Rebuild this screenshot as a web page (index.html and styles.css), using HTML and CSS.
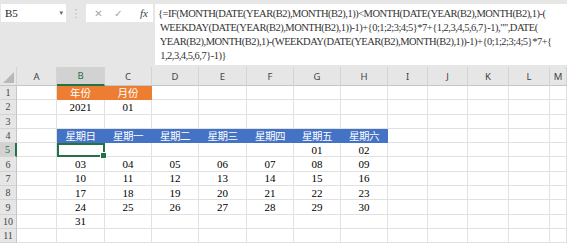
FILE: index.html
```html
<!DOCTYPE html>
<html lang="zh-Hant">
<head>
    <meta charset="UTF-8">
    <title>萬年曆</title>
    <link rel="stylesheet" href="styles.css">
</head>
<body>
    <div class="topbar">
        <div class="name-box"><span>B5</span><span class="caret">▾</span></div>
        <div class="grip">⋮</div>
        <div class="fx-box">
            <span class="btn">✕</span>
            <span class="btn">✓</span>
            <span class="fx">fx</span>
        </div>
        <div class="formula">{=IF(MONTH(DATE(YEAR(B2),MONTH(B2),1))&lt;MONTH(DATE(YEAR(B2),MONTH(B2),1)-(
 WEEKDAY(DATE(YEAR(B2),MONTH(B2),1))-1)+{0;1;2;3;4;5}*7+{1,2,3,4,5,6,7}-1),"",DATE(
 YEAR(B2),MONTH(B2),1)-(WEEKDAY(DATE(YEAR(B2),MONTH(B2),1))-1)+{0;1;2;3;4;5}*7+{
 1,2,3,4,5,6,7}-1)}</div>
    </div>

    <div class="sheet">
        <div class="row head">
            <div class="corner"><span class="tri"></span></div>
            <div class="col">A</div><div class="col active">B</div><div class="col">C</div><div class="col">D</div>
            <div class="col">E</div><div class="col">F</div><div class="col">G</div><div class="col">H</div>
            <div class="col">I</div><div class="col">J</div><div class="col">K</div><div class="col">L</div><div class="col">M</div>
        </div>

        <div class="row">
            <div class="num">1</div>
            <div class="c"></div><div class="c orange">年份</div><div class="c orange">月份</div><div class="c"></div>
            <div class="c"></div><div class="c"></div><div class="c"></div><div class="c"></div>
            <div class="c"></div><div class="c"></div><div class="c"></div><div class="c"></div><div class="c"></div>
        </div>
        <div class="row">
            <div class="num">2</div>
            <div class="c"></div><div class="c">2021</div><div class="c">01</div><div class="c"></div>
            <div class="c"></div><div class="c"></div><div class="c"></div><div class="c"></div>
            <div class="c"></div><div class="c"></div><div class="c"></div><div class="c"></div><div class="c"></div>
        </div>
        <div class="row">
            <div class="num">3</div>
            <div class="c"></div><div class="c"></div><div class="c"></div><div class="c"></div>
            <div class="c"></div><div class="c"></div><div class="c"></div><div class="c"></div>
            <div class="c"></div><div class="c"></div><div class="c"></div><div class="c"></div><div class="c"></div>
        </div>
        <div class="row">
            <div class="num">4</div>
            <div class="c"></div><div class="c blue">星期日</div><div class="c blue">星期一</div><div class="c blue">星期二</div>
            <div class="c blue">星期三</div><div class="c blue">星期四</div><div class="c blue">星期五</div><div class="c blue">星期六</div>
            <div class="c"></div><div class="c"></div><div class="c"></div><div class="c"></div><div class="c"></div>
        </div>
        <div class="row">
            <div class="num active">5</div>
            <div class="c"></div><div class="c selected"><span class="handle"></span></div><div class="c"></div><div class="c"></div>
            <div class="c"></div><div class="c"></div><div class="c">01</div><div class="c">02</div>
            <div class="c"></div><div class="c"></div><div class="c"></div><div class="c"></div><div class="c"></div>
        </div>
        <div class="row">
            <div class="num">6</div>
            <div class="c"></div><div class="c">03</div><div class="c">04</div><div class="c">05</div>
            <div class="c">06</div><div class="c">07</div><div class="c">08</div><div class="c">09</div>
            <div class="c"></div><div class="c"></div><div class="c"></div><div class="c"></div><div class="c"></div>
        </div>
        <div class="row">
            <div class="num">7</div>
            <div class="c"></div><div class="c">10</div><div class="c">11</div><div class="c">12</div>
            <div class="c">13</div><div class="c">14</div><div class="c">15</div><div class="c">16</div>
            <div class="c"></div><div class="c"></div><div class="c"></div><div class="c"></div><div class="c"></div>
        </div>
        <div class="row">
            <div class="num">8</div>
            <div class="c"></div><div class="c">17</div><div class="c">18</div><div class="c">19</div>
            <div class="c">20</div><div class="c">21</div><div class="c">22</div><div class="c">23</div>
            <div class="c"></div><div class="c"></div><div class="c"></div><div class="c"></div><div class="c"></div>
        </div>
        <div class="row">
            <div class="num">9</div>
            <div class="c"></div><div class="c">24</div><div class="c">25</div><div class="c">26</div>
            <div class="c">27</div><div class="c">28</div><div class="c">29</div><div class="c">30</div>
            <div class="c"></div><div class="c"></div><div class="c"></div><div class="c"></div><div class="c"></div>
        </div>
        <div class="row">
            <div class="num">10</div>
            <div class="c"></div><div class="c">31</div><div class="c"></div><div class="c"></div>
            <div class="c"></div><div class="c"></div><div class="c"></div><div class="c"></div>
            <div class="c"></div><div class="c"></div><div class="c"></div><div class="c"></div><div class="c"></div>
        </div>
        <div class="row">
            <div class="num">11</div>
            <div class="c"></div><div class="c"></div><div class="c"></div><div class="c"></div>
            <div class="c"></div><div class="c"></div><div class="c"></div><div class="c"></div>
            <div class="c"></div><div class="c"></div><div class="c"></div><div class="c"></div><div class="c"></div>
        </div>
    </div>
</body>
</html>
```

FILE: styles.css
```css
body {
    margin: 0;
    width: 567px;
    height: 245px;
    overflow: hidden;
    background-color: #ffffff;
    font-family: "Liberation Serif", "Times New Roman", serif;
    color: #000000;
}

/* formula bar */
.topbar {
    height: 67px;
    background-color: #e6e6e6;
    display: flex;
    align-items: flex-start;
    padding-top: 4px;
    box-sizing: border-box;
}

.name-box {
    width: 65px;
    height: 18px;
    margin-left: 1px;
    background-color: #ffffff;
    display: flex;
    align-items: center;
    justify-content: space-between;
    padding: 0 3px 0 4px;
    box-sizing: border-box;
    font-size: 11px;
    color: #222222;
}

.caret {
    font-size: 7px;
    color: #666666;
    font-family: "DejaVu Sans", sans-serif;
}

.grip {
    width: 20px;
    height: 18px;
    display: flex;
    align-items: center;
    justify-content: center;
    color: #b5b5b5;
    font-size: 11px;
    font-family: "DejaVu Sans", sans-serif;
}

.fx-box {
    width: 67px;
    height: 18px;
    background-color: #ffffff;
    display: flex;
    align-items: center;
    padding: 0 5px 0 7px;
    box-sizing: border-box;
    gap: 9px;
}

.btn {
    color: #a6a6a6;
    font-size: 10px;
    font-family: "DejaVu Sans", sans-serif;
    width: 11px;
    text-align: center;
}

.fx {
    margin-left: auto;
    font-style: italic;
    font-size: 11px;
    color: #444444;
}

.formula {
    flex: 1;
    height: 61px;
    margin-left: 2px;
    background-color: #ffffff;
    padding: 3px 0 0 3px;
    box-sizing: border-box;
    white-space: pre;
    overflow: hidden;
    font-size: 10.5px;
    letter-spacing: -0.5px;
    line-height: 14px;
    color: #333333;
}

/* grid */
.row {
    display: grid;
    grid-template-columns: 17px 40px 48px 47px 47px 48px 47px 47px 47px 40px 40px 41px 41px 1fr;
}

.head {
    height: 19px;
    background-color: #e6e6e6;
}

.corner {
    position: relative;
    border-right: 1px solid #d4d4d4;
    border-bottom: 1px solid #c6c6c6;
}

.tri {
    position: absolute;
    right: 2px;
    bottom: 2px;
    width: 0;
    height: 0;
    border-left: 11px solid transparent;
    border-bottom: 11px solid #b8b8b8;
}

.col {
    display: flex;
    align-items: center;
    justify-content: center;
    font-family: "Noto Sans", sans-serif;
    font-size: 9.5px;
    color: #444444;
    border-right: 1px solid #d4d4d4;
    border-bottom: 1px solid #c6c6c6;
}

.col.active {
    background-color: #d2d2d2;
    color: #217346;
    border-bottom: 2px solid #217346;
}

.num {
    height: 14.3px;
    display: flex;
    align-items: center;
    justify-content: center;
    background-color: #e6e6e6;
    font-size: 10px;
    color: #444444;
    border-right: 1px solid #c6c6c6;
    border-bottom: 1px solid #d4d4d4;
    box-sizing: border-box;
}

.num.active {
    background-color: #d2d2d2;
    color: #217346;
    border-right: 2px solid #217346;
}

.c {
    height: 14.3px;
    display: flex;
    align-items: center;
    justify-content: center;
    border-right: 1px solid #e1e1e1;
    border-bottom: 1px solid #e1e1e1;
    box-sizing: border-box;
    font-size: 11px;
}

.c.orange {
    background-color: #ed7d31;
    border-color: #ed7d31;
    color: #ffffff;
    font-family: "Noto Sans CJK TC", sans-serif;
    font-size: 10.5px;
}

.c.blue {
    background-color: #4472c4;
    border-color: #4472c4;
    color: #ffffff;
    font-family: "Noto Sans CJK TC", sans-serif;
    font-size: 10.5px;
    letter-spacing: -0.5px;
}

.c.selected {
    position: relative;
    border: 2px solid #217346;
}

.handle {
    position: absolute;
    right: -4px;
    bottom: -4px;
    width: 5px;
    height: 5px;
    background-color: #217346;
    border: 1px solid #ffffff;
}
```
